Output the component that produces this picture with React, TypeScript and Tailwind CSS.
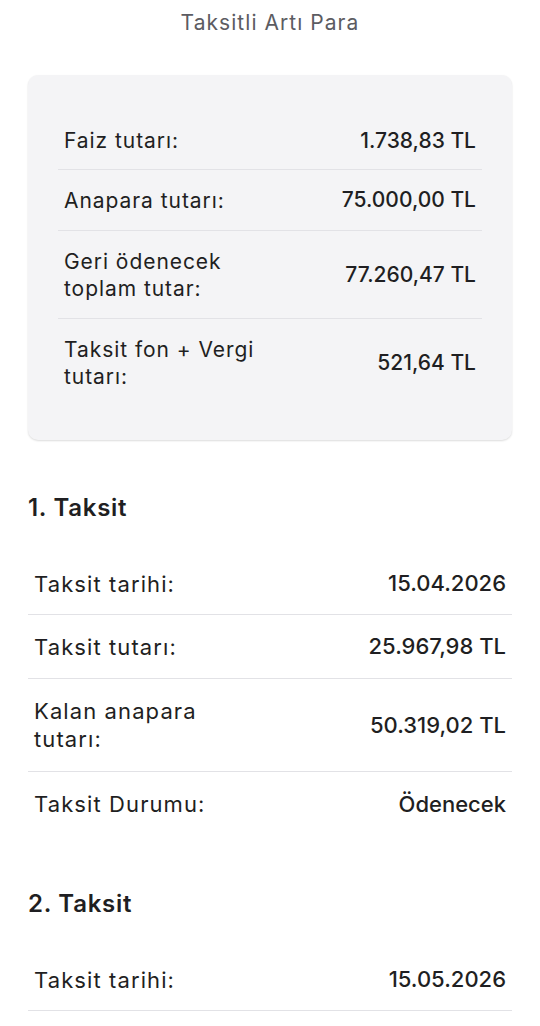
import React from "react";

type Row = { label: string; value: string; tall?: boolean };

const summary: Row[] = [
  { label: "Faiz tutarı:", value: "1.738,83 TL" },
  { label: "Anapara tutarı:", value: "75.000,00 TL" },
  { label: "Geri ödenecek toplam tutar:", value: "77.260,47 TL", tall: true },
  { label: "Taksit fon + Vergi tutarı:", value: "521,64 TL", tall: true },
];

const installments: { title: string; rows: Row[] }[] = [
  {
    title: "1. Taksit",
    rows: [
      { label: "Taksit tarihi:", value: "15.04.2026" },
      { label: "Taksit tutarı:", value: "25.967,98 TL" },
      { label: "Kalan anapara tutarı:", value: "50.319,02 TL", tall: true },
      { label: "Taksit Durumu:", value: "Ödenecek" },
    ],
  },
  {
    title: "2. Taksit",
    rows: [{ label: "Taksit tarihi:", value: "15.05.2026" }],
  },
];

export default function App() {
  return (
    <div
      className="min-h-screen bg-white text-[#1f1f22]"
      style={{ fontFamily: "Inter, 'Noto Sans', sans-serif" }}
    >
      {/* Header */}
      <div className="h-[45px] flex items-center justify-center text-[21px] tracking-[0.05em] text-[#5c5c62]">
        Taksitli Artı Para
      </div>

      {/* Summary card */}
      <div className="mx-[28px] mt-[30px] rounded-[10px] bg-[#f4f4f6] px-[30px] pt-[37px] pb-[33px] shadow-[0_1px_2px_rgba(0,0,0,0.14)]">
        {summary.map((r, i) => (
          <div
            key={r.label}
            className={
              "flex items-center justify-between gap-4 px-[6px] " +
              (r.tall ? "h-[88px] " : i === 0 ? "h-[58px] " : "h-[61px] ") +
              (i < summary.length - 1 ? "border-b border-[#e2e2e6]" : "")
            }
          >
            <span className="text-[21px] leading-[27px] tracking-[0.045em] max-w-[220px]">
              {r.label}
            </span>
            <span className="text-[21px] font-medium whitespace-nowrap">
              {r.value}
            </span>
          </div>
        ))}
      </div>

      {/* Installments */}
      <div className="px-[28px] pt-[53px]">
        {installments.map((inst) => (
          <div key={inst.title} className="mb-[53px]">
            <div className="text-[24px] font-semibold leading-[30px] tracking-[0.03em] mb-[30px]">
              {inst.title}
            </div>
            {inst.rows.map((r, i) => (
              <div
                key={r.label}
                className={
                  "flex items-center justify-between gap-4 px-[6px] " +
                  (r.tall ? "h-[93px] " : i === 0 ? "h-[62px] " : "h-[64px] ") +
                  (i < inst.rows.length - 1 || inst.rows.length < 4
                    ? "border-b border-[#e2e2e6]"
                    : "")
                }
              >
                <span className="text-[22px] leading-[28px] tracking-[0.05em] max-w-[200px]">
                  {r.label}
                </span>
                <span className="text-[22px] font-medium whitespace-nowrap">
                  {r.value}
                </span>
              </div>
            ))}
          </div>
        ))}
      </div>
    </div>
  );
}
